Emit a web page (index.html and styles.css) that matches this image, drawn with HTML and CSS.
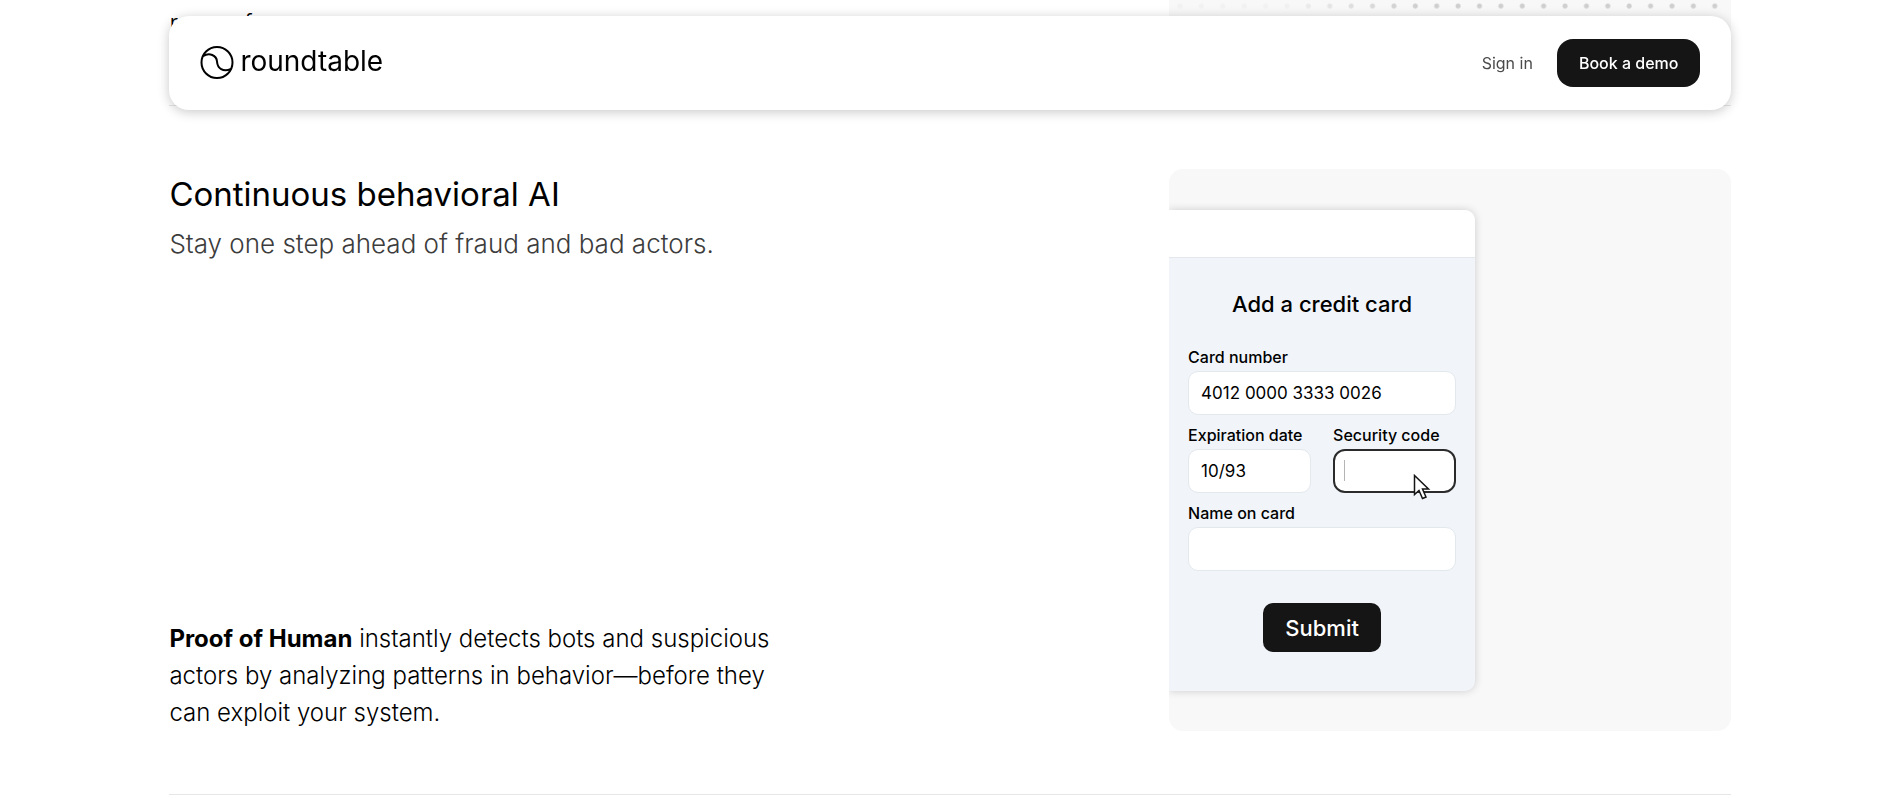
FILE: index.html
```html
<!DOCTYPE html>
<html lang="en">
<head>
    <meta charset="UTF-8">
    <meta name="viewport" content="width=device-width, initial-scale=1.0">
    <title>Roundtable</title>
    <link rel="stylesheet" href="styles.css">
</head>
<body>

    <header class="navbar">
        <a class="logo" href="#">
            <svg width="34" height="34" viewBox="0 0 34 34" fill="none" stroke="#000" stroke-width="2">
                <circle cx="17" cy="16.500" r="15.5"/>
                <path d="M3 10C9.500 6.500 16.500 9 17 15.500C17.500 22.500 23 26.500 31 23"/>
            </svg>
            <span>roundtable</span>
        </a>
        <nav class="nav-links">
            <a class="sign-in" href="#">Sign in</a>
            <button class="btn-demo" type="button">Book a demo</button>
        </nav>
    </header>

    <main class="page">

        <!-- end of the previous feature, scrolled under the navbar -->
        <section class="scrolled">
            <p class="feature-text">to every<br>rows of</p>
            <div class="dots-panel"><div class="dots"></div></div>
        </section>

        <section class="feature">
            <div class="feature-copy">
                <div>
                    <h2>Continuous behavioral AI</h2>
                    <p class="subtitle">Stay one step ahead of fraud and bad actors.</p>
                </div>
                <p class="feature-text"><strong>Proof of Human</strong> instantly detects bots and suspicious actors by analyzing patterns in behavior—before they can exploit your system.</p>
            </div>

            <div class="panel">
                <form class="card-window">
                    <div class="window-bar"></div>
                    <div class="window-body">
                        <h3>Add a credit card</h3>
                        <div class="fields">
                            <div class="field wide">
                                <label for="number">Card number</label>
                                <input type="text" id="number" value="4012 0000 3333 0026">
                            </div>
                            <div class="field">
                                <label for="expiry">Expiration date</label>
                                <input type="text" id="expiry" value="10/93">
                            </div>
                            <div class="field">
                                <label for="code">Security code</label>
                                <input class="active" type="text" id="code">
                                <span class="caret"></span>
                                <svg class="cursor" width="18" height="26" viewBox="0 0 18 26" fill="#fff" stroke="#151515" stroke-width="1.5">
                                    <path d="M1.500 1.500V20.500L6 16.500L9.500 24.500L13 23L9.500 15H15.500Z"/>
                                </svg>
                            </div>
                            <div class="field wide">
                                <label for="name">Name on card</label>
                                <input type="text" id="name">
                            </div>
                        </div>
                        <button class="btn-submit" type="button">Submit</button>
                    </div>
                </form>
            </div>
        </section>

    </main>

</body>
</html>
```
FILE: styles.css
```css
* { margin: 0; padding: 0; box-sizing: border-box; font-family: Inter, sans-serif; }

body {
    background: #fff;
    color: #000;
    overflow-x: hidden;
}

/* --- NAVBAR --- */
.navbar {
    position: fixed;
    top: 16px;
    left: 9%;
    right: 8%;
    z-index: 10;
    display: flex;
    justify-content: space-between;
    align-items: center;
    padding: 23px 31px;
    background: #fff;
    border-radius: 20px;
    box-shadow: 0 2px 12px rgba(0, 0, 0, 0.22);
}

.logo {
    display: flex;
    align-items: flex-start;
    gap: 6px;
    color: #000;
    font-size: 28px;
    line-height: 30px;
    text-decoration: none;
}

.nav-links { display: flex; align-items: center; gap: 24px; }

.sign-in { color: #4a4a4a; font-size: 16px; text-decoration: none; }

.btn-demo {
    height: 48px;
    padding: 0 22px;
    border: none;
    border-radius: 16px;
    background: #151515;
    color: #fff;
    font-size: 16px;
    font-weight: 500;
}

/* --- PAGE --- */
.page { margin: 0 8% 0 9%; }

.scrolled {
    display: flex;
    justify-content: space-between;
    align-items: flex-end;
    height: 106px;
    padding-bottom: 63px;
    border-bottom: 1px solid #e6e6e6;
}

.dots-panel {
    width: 36%;
    height: 42px;
    padding: 0 5px;
    background: #f8f8f8;
    border-radius: 0 0 14px 14px;
}

.dots {
    height: 16px;
    background: radial-gradient(circle at 6px 6px, #cfcfcf 2px, transparent 3px) 0 0 / 21.4px 21.4px;
    -webkit-mask-image: linear-gradient(to right, rgba(0, 0, 0, 0.15) 20%, #000 42%);
    mask-image: linear-gradient(to right, rgba(0, 0, 0, 0.15) 20%, #000 42%);
}

.feature {
    display: flex;
    justify-content: space-between;
    padding: 63px 0;
    border-bottom: 1px solid #e6e6e6;
}

.feature-copy {
    display: flex;
    flex-direction: column;
    justify-content: space-between;
    width: 39%;
}

h2 { font-size: 33px; line-height: 50px; font-weight: 400; }

.subtitle {
    margin-top: 5px;
    color: #3c3c3c;
    font-size: 26px;
    line-height: 40px;
    font-weight: 300;
}

.feature-text { font-size: 24px; line-height: 37px; font-weight: 300; }
.feature-text strong { font-weight: 700; }

/* --- CREDIT CARD PANEL --- */
.panel {
    width: 36%;
    aspect-ratio: 1;
    padding: 41px 0 40px;
    background: #f8f8f8;
    border-radius: 14px;
    overflow: hidden;
}

.card-window {
    display: flex;
    flex-direction: column;
    width: 306px;
    height: 100%;
    border-radius: 0 10px 10px 0;
    background: #f1f5fa;
    box-shadow: 0 0 8px rgba(0, 0, 0, 0.18);
}

.window-bar {
    height: 48px;
    background: #fff;
    border-bottom: 1px solid #e4e8ec;
    border-radius: 0 10px 0 0;
}

.window-body {
    display: flex;
    flex-direction: column;
    align-items: center;
    padding: 32px 19px 0;
}

h3 {
    margin-bottom: 27px;
    font-size: 22px;
    line-height: 28px;
    font-weight: 500;
}

.fields {
    display: grid;
    grid-template-columns: 1fr 1fr;
    gap: 8px 22px;
    width: 100%;
}

.field { position: relative; }
.wide { grid-column: span 2; }

label {
    display: block;
    margin-bottom: 2px;
    font-size: 16px;
    line-height: 24px;
    font-weight: 500;
    white-space: nowrap;
}

input {
    display: block;
    width: 100%;
    height: 44px;
    padding: 0 12px;
    border: 1px solid #e3e8ec;
    border-radius: 10px;
    background: #fff;
    color: #000;
    font-size: 17px;
    outline: none;
}

input.active { border: 2px solid #2b2b2b; border-radius: 12px; }

/* text caret and mouse pointer over the active input */
.caret {
    position: absolute;
    left: 11px;
    bottom: 12px;
    width: 1px;
    height: 21px;
    background: #b5b5b5;
}

.cursor { position: absolute; right: 25px; bottom: -7px; }

.btn-submit {
    height: 49px;
    margin-top: 32px;
    padding: 0 22px;
    border: none;
    border-radius: 10px;
    background: #151515;
    color: #fff;
    font-size: 22px;
    font-weight: 500;
}
```
